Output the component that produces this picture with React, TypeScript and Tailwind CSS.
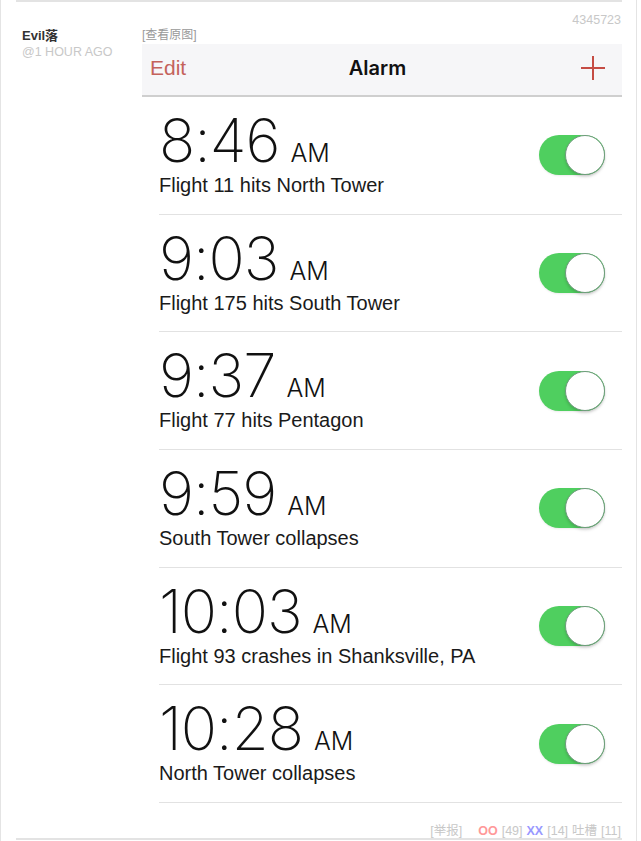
const alarms = [
  { time: "8:46", label: "Flight 11 hits North Tower" },
  { time: "9:03", label: "Flight 175 hits South Tower" },
  { time: "9:37", label: "Flight 77 hits Pentagon" },
  { time: "9:59", label: "South Tower collapses" },
  { time: "10:03", label: "Flight 93 crashes in Shanksville, PA" },
  { time: "10:28", label: "North Tower collapses" },
];

const Toggle = () => (
  <div className="relative h-[40px] w-[66px] rounded-full bg-[#4fcf5f] shadow-[0_1px_2px_rgba(0,0,0,0.08)]">
    <div className="absolute right-0 top-0 h-[40px] w-[40px] rounded-full border border-[#6f9a7c] bg-white shadow-[0_2px_3px_rgba(0,0,0,0.15)]" />
  </div>
);

const AlarmRow = ({ time, label }: { time: string; label: string }) => (
  <div className="pl-[17px]">
    <div className="flex h-[117.7px] items-center justify-between border-b border-[#e2e2e2] pr-[17px]">
      <div className="self-start pt-[13px]">
        <div className="flex items-baseline font-['Inter',sans-serif] leading-none text-[#111]">
          <span className="text-[60px] font-[170] tracking-[-1px]">{time}</span>
          <span className="ml-[11px] text-[25px] font-light">AM</span>
        </div>
        <div className="mt-[3px] font-['Liberation_Sans',sans-serif] text-[20px] leading-[24px] text-[#1a1a1a]">
          {label}
        </div>
      </div>
      <Toggle />
    </div>
  </div>
);

export default function App() {
  return (
    <div className="h-[841px] w-[637px] border-x border-[#e4e4e4] bg-white font-['Liberation_Sans','Noto_Sans_CJK_SC',sans-serif]">
      <div className="ml-[15px] h-[840px] w-[606px] border-y-2 border-[#e3e3e3]">
        <div className="pr-[1px] pt-[10px] text-right text-[12.5px] leading-[16px] text-[#c8c8c8]">4345723</div>
        <div className="-mt-[1px] flex">
          <div className="w-[126px] pl-[6px]">
            <div className="text-[13px] font-bold leading-[17px] text-[#333]">Evil落</div>
            <div className="text-[12.5px] leading-[16px] text-[#c8c8c8]">@1 HOUR AGO</div>
          </div>
          <div className="w-[480px]">
            <div className="text-[12px] leading-[17px] text-[#999]">[查看原图]</div>
            <div className="bg-white">
              <div className="flex h-[53px] items-center justify-between border-b-2 border-[#cfcfcf] bg-[#f6f6f8] pb-[4px] pl-[8px] pr-[17px]">
                <span className="w-[60px] text-[21px] text-[#c4625b]">Edit</span>
                <span className="text-[20px] font-semibold font-['Inter',sans-serif] text-[#111]">Alarm</span>
                <span className="flex w-[60px] justify-end">
                  <svg width="24" height="24" viewBox="0 0 24 24">
                    <path d="M12 0v24M0 12h24" stroke="#c54c44" strokeWidth="2" />
                  </svg>
                </span>
              </div>
              {alarms.map((a) => (
                <AlarmRow key={a.time} time={a.time} label={a.label} />
              ))}
            </div>
            <div className="flex justify-end gap-[4px] pr-[1px] pt-[20px] text-[12.5px] leading-[16px] text-[#c8c8c8]">
              <span className="mr-[12px]">[举报]</span>
              <span className="font-bold text-[#f99]">OO</span>
              <span>[49]</span>
              <span className="font-bold text-[#99f]">XX</span>
              <span>[14]</span>
              <span>吐槽</span>
              <span>[11]</span>
            </div>
          </div>
        </div>
      </div>
    </div>
  );
}
